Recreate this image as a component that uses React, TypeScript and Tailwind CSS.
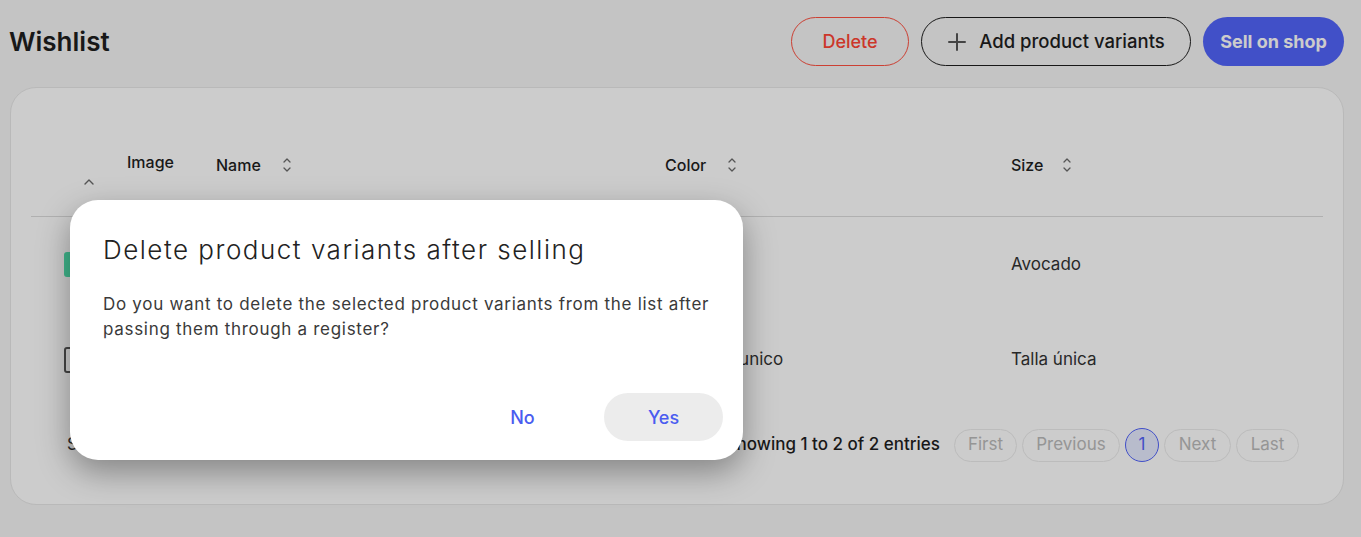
import React from "react";

function SortIcon() {
  return (
    <svg width="10" height="18" viewBox="0 0 10 18" fill="none" stroke="#6b6b6b" strokeWidth="1.3" strokeLinecap="round" strokeLinejoin="round">
      <path d="M2 6 L5 3 L8 6" />
      <path d="M2 12 L5 15 L8 12" />
    </svg>
  );
}

function PlusIcon() {
  return (
    <svg width="20" height="20" viewBox="0 0 20 20" fill="none" stroke="#555" strokeWidth="2" strokeLinecap="round">
      <path d="M10 2 V18 M2 10 H18" />
    </svg>
  );
}

const rows = [
  { color: "", size: "Avocado", checked: true },
  { color: "Color unico", size: "Talla única", checked: false },
];

export default function App() {
  return (
    <div className="relative w-[1361px] h-[537px] overflow-hidden bg-[#f5f5f5] font-['Inter',sans-serif] text-[#1f1f1f]">
      <div className="flex items-center justify-between pl-[9px] pr-[17px] pt-[17px]">
        <h1 className="text-[26px] font-semibold">Wishlist</h1>
        <div className="flex items-center gap-3">
          <button className="h-[49px] w-[118px] rounded-full border border-[#ff5040] text-[18px] font-medium text-[#ff4535]">
            Delete
          </button>
          <button className="flex h-[49px] w-[270px] items-center justify-center gap-[12px] rounded-full border border-[#1f1f1f] text-[18.5px] font-medium">
            <PlusIcon />
            Add product variants
          </button>
          <button className="h-[49px] w-[141px] rounded-full bg-[#5264fa] text-[18px] font-bold text-white">
            Sell on shop
          </button>
        </div>
      </div>

      <div className="ml-[10px] mr-[17px] mt-[21px] rounded-[26px] border border-[#e8e8e8] bg-white px-[20px] pb-[42px] pt-[25px]">
        <div className="grid h-[104px] grid-cols-[96px_89px_449px_346px_1fr] border-b border-[#dcdcdc] text-[16px] font-medium">
          <div className="flex items-center justify-start pl-[52px] pt-[34px]">
            <svg width="12" height="8" viewBox="0 0 12 8" fill="none" stroke="#6b6b6b" strokeWidth="1.4" strokeLinecap="round" strokeLinejoin="round">
              <path d="M2 6 L6 2 L10 6" />
            </svg>
          </div>
          <div className="flex items-center pb-[6px]">Image</div>
          <div className="flex items-center gap-[21px]">
            Name <SortIcon />
          </div>
          <div className="flex items-center gap-[21px]">
            Color <SortIcon />
          </div>
          <div className="flex items-center gap-[19px]">
            Size <SortIcon />
          </div>
        </div>

        {rows.map((r, i) => (
          <div key={i} className="grid h-[95px] grid-cols-[96px_89px_449px_346px_1fr] items-center text-[17px] text-[#333]">
            <div className="pl-[33px]">
              {r.checked ? (
                <div className="flex h-[25px] w-[25px] items-center justify-center rounded-[3px] bg-[#4fe3ae]">
                  <svg width="14" height="14" viewBox="0 0 14 14" fill="none" stroke="#111" strokeWidth="2">
                    <path d="M2 7 L6 11 L12 3" />
                  </svg>
                </div>
              ) : (
                <div className="h-[26px] w-[25px] rounded-[3px] border-2 border-[#555]" />
              )}
            </div>
            <div className="h-[60px] w-[60px] rounded-lg bg-[#eee]" />
            <div />
            <div className="pl-[26px]">{r.color}</div>
            <div>{r.size}</div>
          </div>
        ))}

        <div className="mt-[21px] flex items-center justify-between">
          <div className="pl-[36px] text-[17px] text-[#333]">Show 10 entries</div>
          <div className="flex items-center gap-[14px] pr-[24px]">
            <span className="text-[17px] font-medium text-[#1f1f1f]">Showing 1 to 2 of 2 entries</span>
            <div className="flex items-center gap-[5px] text-[17px] text-[#bbb]">
              <span className="flex h-[33px] w-[63px] items-center justify-center rounded-full border border-[#ebebeb]">First</span>
              <span className="flex h-[33px] w-[98px] items-center justify-center rounded-full border border-[#ebebeb]">Previous</span>
              <span className="flex h-[34px] w-[34px] items-center justify-center rounded-full border border-[#5264fa] bg-[#e7ebff] text-[#5264fa]">1</span>
              <span className="flex h-[33px] w-[67px] items-center justify-center rounded-full border border-[#ebebeb]">Next</span>
              <span className="flex h-[33px] w-[63px] items-center justify-center rounded-full border border-[#ebebeb]">Last</span>
            </div>
          </div>
        </div>
      </div>

      <div className="absolute inset-0 bg-black/20" />

      <div className="absolute left-[70px] top-[200px] flex h-[260px] w-[673px] flex-col rounded-[28px] bg-white px-[33px] pt-[30px] shadow-[0_12px_32px_rgba(0,0,0,0.35)]">
        <h2 className="text-[26px] font-light tracking-[1.5px] text-[#222]">Delete product variants after selling</h2>
        <p className="mt-[23px] text-[17px] leading-[25px] tracking-[0.7px] text-[#3a3a3a]">
          Do you want to delete the selected product variants from the list after passing them through a register?
        </p>
        <div className="mt-auto mb-[19px] mr-[-13px] flex items-center justify-end gap-[22px]">
          <button className="h-[48px] w-[119px] rounded-full text-[18px] font-medium text-[#4a5cf0]">No</button>
          <button className="h-[48px] w-[119px] rounded-full bg-[#ececec] text-[18px] font-medium text-[#4a5cf0]">Yes</button>
        </div>
      </div>
    </div>
  );
}
